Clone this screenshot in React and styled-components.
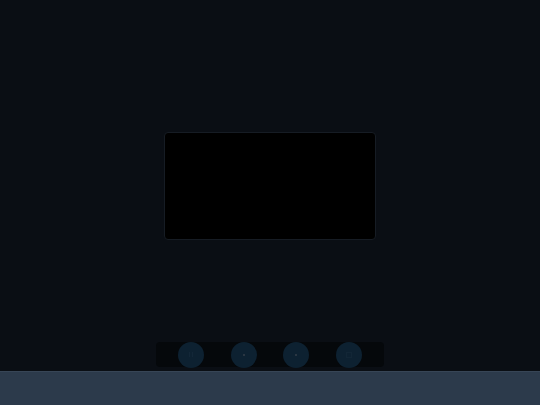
import React from "react";
import styled, { createGlobalStyle } from "styled-components";

const GlobalStyle = createGlobalStyle`
  html, body {
    margin: 0;
    padding: 0;
    background: #0a0e14;
    font-family: "Liberation Sans", Arial, sans-serif;
  }
`;

function App() {
  return (
    <>
      <GlobalStyle />
      <Page>
        <Stage>
          <Video />
          <Controls>
            <RoundButton>
              <Bars>
                <i />
                <i />
              </Bars>
            </RoundButton>
            <RoundButton>
              <Dot />
            </RoundButton>
            <RoundButton>
              <Dot />
            </RoundButton>
            <RoundButton>
              <Square />
            </RoundButton>
          </Controls>
        </Stage>
        <Footer />
      </Page>
    </>
  );
}

export default App;

const Page = styled.div`
  display: flex;
  flex-direction: column;
  width: 540px;
  height: 405px;
  background: #0a0e14;
`;

const Stage = styled.div`
  position: relative;
  flex: 1;
  display: flex;
  align-items: center;
  justify-content: center;
`;

const Video = styled.div`
  width: 210px;
  height: 106px;
  background: #000;
  border: 1px solid #161c24;
  border-radius: 4px;
`;

const Controls = styled.div`
  position: absolute;
  left: 156px;
  bottom: 4px;
  width: 228px;
  height: 25px;
  box-sizing: border-box;
  display: flex;
  align-items: center;
  justify-content: space-between;
  padding: 0 22px;
  background: #05080b;
  border-radius: 4px;
`;

const RoundButton = styled.div`
  width: 26px;
  height: 26px;
  border-radius: 50%;
  background: #0d2131;
  display: flex;
  align-items: center;
  justify-content: center;
`;

const Dot = styled.span`
  width: 2px;
  height: 2px;
  background: #2a3642;
`;

const Square = styled.span`
  width: 4px;
  height: 4px;
  border: 1px solid #122636;
`;

const Bars = styled.span`
  display: flex;
  gap: 2px;
  > i {
    width: 1px;
    height: 5px;
    background: #132738;
  }
`;

const Footer = styled.div`
  height: 33px;
  background: #2c3a4b;
  border-top: 1px solid #374556;
`;
